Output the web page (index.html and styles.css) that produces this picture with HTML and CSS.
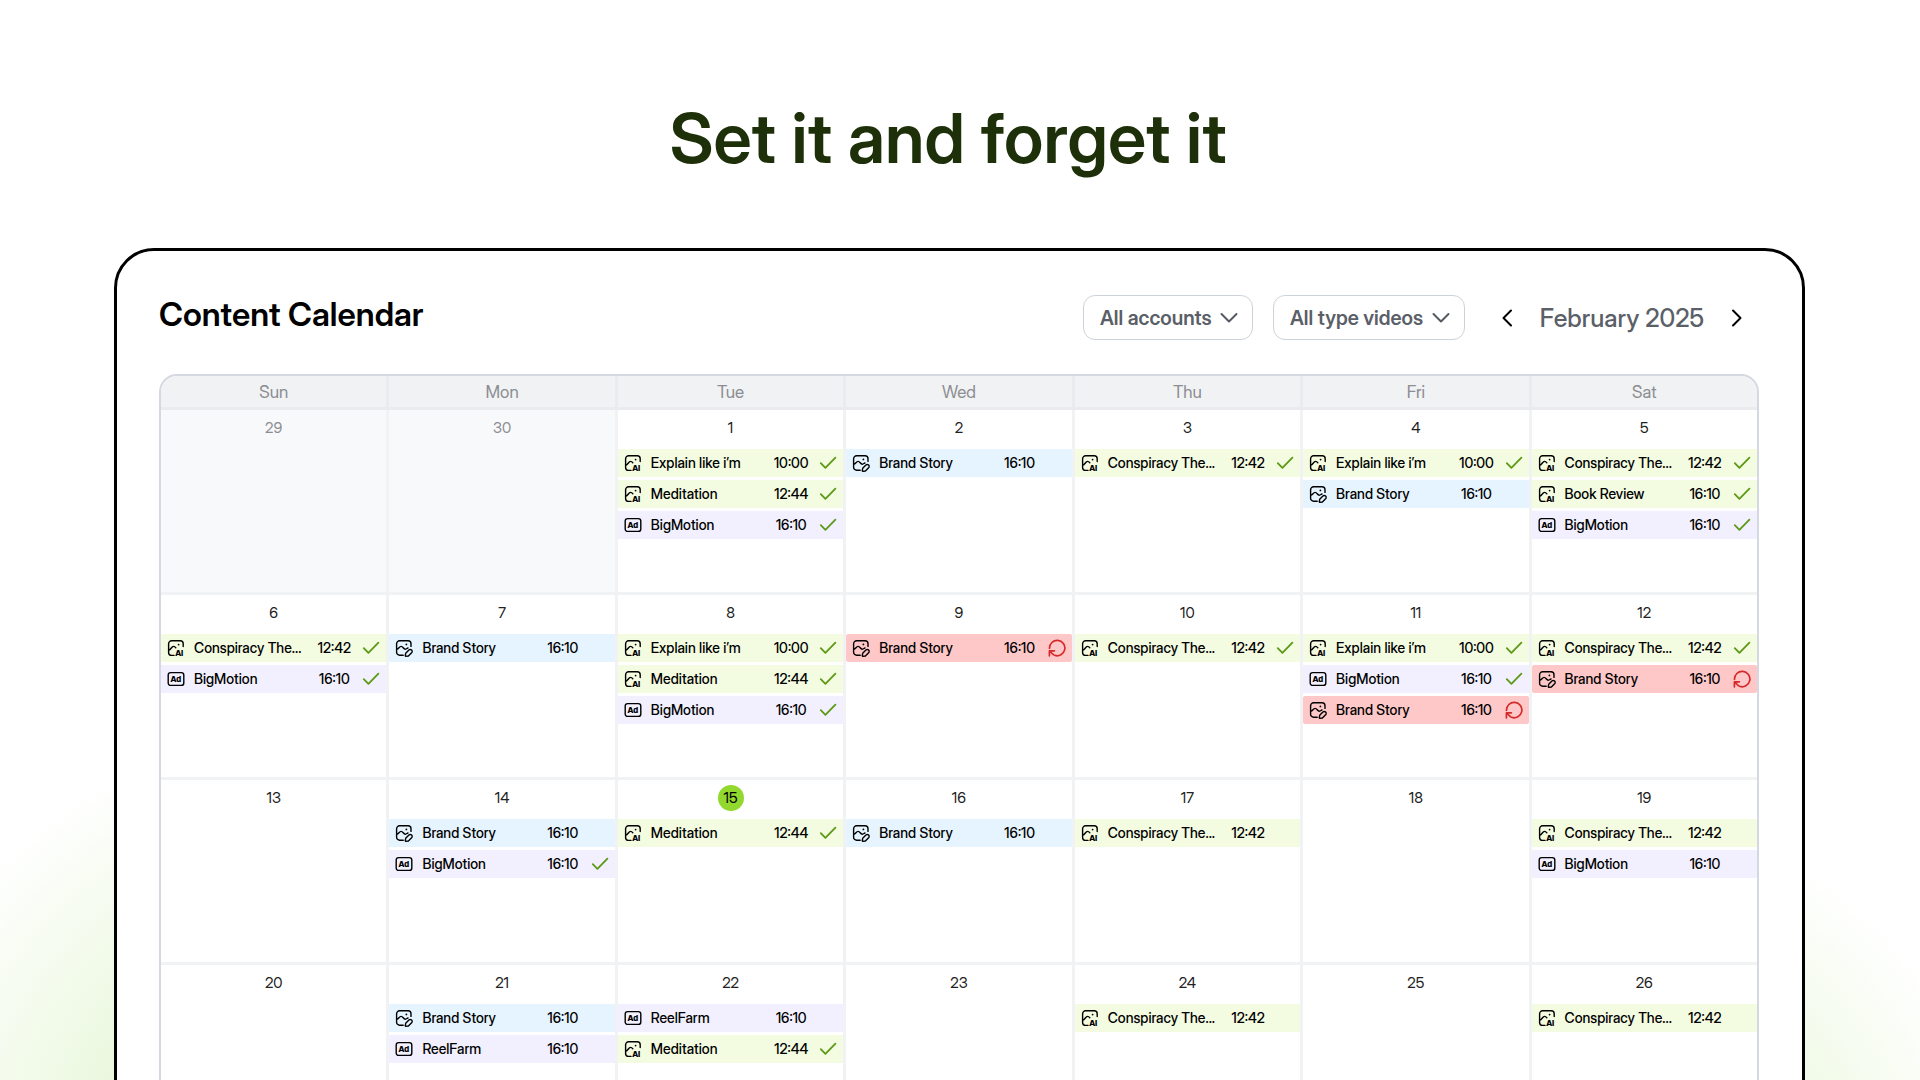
FILE: index.html
```html
<!DOCTYPE html>
<html lang="en">
<head>
<meta charset="utf-8">
<meta name="viewport" content="width=device-width, initial-scale=1">
<title>Content Calendar</title>
<link rel="stylesheet" href="styles.css">
</head>
<body>
<svg class="sprite" aria-hidden="true">
  <symbol id="ai" viewBox="0 0 18 18">
    <path class="line" d="M16.2 7.6V4.800a3 3 0 0 0-3-3H4.600a3 3 0 0 0-3 3v8.600a3 3 0 0 0 3 3h2.400M1.800 11.200c2.200-.4 2.600-3.800 4.800-3.800 1 0 1.600.6 2.200 1.300"/>
    <circle cx="11.600" cy="5.600" r=".9"/>
    <text class="glyph" x="8.200" y="17">AI</text>
  </symbol>
  <symbol id="edit" viewBox="0 0 18 18">
    <path class="line" d="M16 7.400V4.800a3 3 0 0 0-3-3H4.600a3 3 0 0 0-3 3v8.400a3 3 0 0 0 3 3h3.600M1.800 10.200c2-.2 2.400-2.800 4.300-2.800 2 0 2.200 2.800 4.200 2.800 1.300 0 1.700-1 2.700-1.200"/>
    <circle cx="11.400" cy="5.400" r=".9"/>
    <path class="line" d="M10.700 14.300l3.200-3.200a1.900 1.900 0 0 1 2.700 2.700l-3.200 3.200-2.700.3-.5-.5z"/>
  </symbol>
  <symbol id="ad" viewBox="0 0 18 18">
    <rect class="line" x="1.200" y="2.600" width="15.600" height="12.800" rx="2.500"/>
    <text class="glyph" x="3.500" y="11.900">Ad</text>
  </symbol>
  <symbol id="check" viewBox="0 0 18 18">
    <path class="tick" d="M1.800 9.200l4.600 4.600L16.400 3.600"/>
  </symbol>
  <symbol id="retry" viewBox="0 0 18 18">
    <path class="turn" d="M1.500 9.400A7.700 7.700 0 1 1 6.600 16.300M1.400 16.800v-5h5M1.600 12l3.800 3.600"/>
  </symbol>
</svg>
<main class="stage">
  <header class="hero"><h1>Set it and forget it</h1></header>
  <section class="panel">
    <div class="toolbar">
      <h2>Content Calendar</h2>
      <select class="filter" aria-label="Accounts"><option>All accounts</option></select>
      <select class="filter" aria-label="Video type"><option>All type videos</option></select>
      <div class="pager">
        <button type="button" aria-label="Previous month"><svg viewBox="0 0 20 20"><path d="M14 2.500 6.500 10l7.500 7.500"/></svg></button>
        <span class="month">February 2025</span>
        <button type="button" aria-label="Next month"><svg viewBox="0 0 20 20"><path d="M6 2.500 13.500 10 6 17.500"/></svg></button>
      </div>
    </div>
    <div class="calendar">
      <table>
        <thead><tr><th>Sun</th><th>Mon</th><th>Tue</th><th>Wed</th><th>Thu</th><th>Fri</th><th>Sat</th></tr></thead>
        <tbody>
          <tr>
            <td class="outside"><span class="day">29</span></td>
            <td class="outside"><span class="day">30</span></td>
            <td><span class="day">1</span><ul>
              <li class="green"><svg><use href="#ai"/></svg><span>Explain like i’m</span><time>10:00</time><svg><use href="#check"/></svg></li>
              <li class="green"><svg><use href="#ai"/></svg><span>Meditation</span><time>12:44</time><svg><use href="#check"/></svg></li>
              <li class="violet"><svg><use href="#ad"/></svg><span>BigMotion</span><time>16:10</time><svg><use href="#check"/></svg></li></ul></td>
            <td><span class="day">2</span><ul>
              <li class="blue"><svg><use href="#edit"/></svg><span>Brand Story</span><time>16:10</time></li></ul></td>
            <td><span class="day">3</span><ul>
              <li class="green"><svg><use href="#ai"/></svg><span>Conspiracy The...</span><time>12:42</time><svg><use href="#check"/></svg></li></ul></td>
            <td><span class="day">4</span><ul>
              <li class="green"><svg><use href="#ai"/></svg><span>Explain like i’m</span><time>10:00</time><svg><use href="#check"/></svg></li>
              <li class="blue"><svg><use href="#edit"/></svg><span>Brand Story</span><time>16:10</time></li></ul></td>
            <td><span class="day">5</span><ul>
              <li class="green"><svg><use href="#ai"/></svg><span>Conspiracy The...</span><time>12:42</time><svg><use href="#check"/></svg></li>
              <li class="green"><svg><use href="#ai"/></svg><span>Book Review</span><time>16:10</time><svg><use href="#check"/></svg></li>
              <li class="violet"><svg><use href="#ad"/></svg><span>BigMotion</span><time>16:10</time><svg><use href="#check"/></svg></li></ul></td>
          </tr>
          <tr>
            <td><span class="day">6</span><ul>
              <li class="green"><svg><use href="#ai"/></svg><span>Conspiracy The...</span><time>12:42</time><svg><use href="#check"/></svg></li>
              <li class="violet"><svg><use href="#ad"/></svg><span>BigMotion</span><time>16:10</time><svg><use href="#check"/></svg></li></ul></td>
            <td><span class="day">7</span><ul>
              <li class="blue"><svg><use href="#edit"/></svg><span>Brand Story</span><time>16:10</time></li></ul></td>
            <td><span class="day">8</span><ul>
              <li class="green"><svg><use href="#ai"/></svg><span>Explain like i’m</span><time>10:00</time><svg><use href="#check"/></svg></li>
              <li class="green"><svg><use href="#ai"/></svg><span>Meditation</span><time>12:44</time><svg><use href="#check"/></svg></li>
              <li class="violet"><svg><use href="#ad"/></svg><span>BigMotion</span><time>16:10</time><svg><use href="#check"/></svg></li></ul></td>
            <td><span class="day">9</span><ul>
              <li class="red"><svg><use href="#edit"/></svg><span>Brand Story</span><time>16:10</time><button type="button" aria-label="Retry"><svg><use href="#retry"/></svg></button></li></ul></td>
            <td><span class="day">10</span><ul>
              <li class="green"><svg><use href="#ai"/></svg><span>Conspiracy The...</span><time>12:42</time><svg><use href="#check"/></svg></li></ul></td>
            <td><span class="day">11</span><ul>
              <li class="green"><svg><use href="#ai"/></svg><span>Explain like i’m</span><time>10:00</time><svg><use href="#check"/></svg></li>
              <li class="violet"><svg><use href="#ad"/></svg><span>BigMotion</span><time>16:10</time><svg><use href="#check"/></svg></li>
              <li class="red"><svg><use href="#edit"/></svg><span>Brand Story</span><time>16:10</time><button type="button" aria-label="Retry"><svg><use href="#retry"/></svg></button></li></ul></td>
            <td><span class="day">12</span><ul>
              <li class="green"><svg><use href="#ai"/></svg><span>Conspiracy The...</span><time>12:42</time><svg><use href="#check"/></svg></li>
              <li class="red"><svg><use href="#edit"/></svg><span>Brand Story</span><time>16:10</time><button type="button" aria-label="Retry"><svg><use href="#retry"/></svg></button></li></ul></td>
          </tr>
          <tr>
            <td><span class="day">13</span></td>
            <td><span class="day">14</span><ul>
              <li class="blue"><svg><use href="#edit"/></svg><span>Brand Story</span><time>16:10</time></li>
              <li class="violet"><svg><use href="#ad"/></svg><span>BigMotion</span><time>16:10</time><svg><use href="#check"/></svg></li></ul></td>
            <td><span class="day today">15</span><ul>
              <li class="green"><svg><use href="#ai"/></svg><span>Meditation</span><time>12:44</time><svg><use href="#check"/></svg></li></ul></td>
            <td><span class="day">16</span><ul>
              <li class="blue"><svg><use href="#edit"/></svg><span>Brand Story</span><time>16:10</time></li></ul></td>
            <td><span class="day">17</span><ul>
              <li class="green"><svg><use href="#ai"/></svg><span>Conspiracy The...</span><time>12:42</time></li></ul></td>
            <td><span class="day">18</span></td>
            <td><span class="day">19</span><ul>
              <li class="green"><svg><use href="#ai"/></svg><span>Conspiracy The...</span><time>12:42</time></li>
              <li class="violet"><svg><use href="#ad"/></svg><span>BigMotion</span><time>16:10</time></li></ul></td>
          </tr>
          <tr>
            <td><span class="day">20</span></td>
            <td><span class="day">21</span><ul>
              <li class="blue"><svg><use href="#edit"/></svg><span>Brand Story</span><time>16:10</time></li>
              <li class="violet"><svg><use href="#ad"/></svg><span>ReelFarm</span><time>16:10</time></li></ul></td>
            <td><span class="day">22</span><ul>
              <li class="violet"><svg><use href="#ad"/></svg><span>ReelFarm</span><time>16:10</time></li>
              <li class="green"><svg><use href="#ai"/></svg><span>Meditation</span><time>12:44</time><svg><use href="#check"/></svg></li></ul></td>
            <td><span class="day">23</span></td>
            <td><span class="day">24</span><ul>
              <li class="green"><svg><use href="#ai"/></svg><span>Conspiracy The...</span><time>12:42</time></li></ul></td>
            <td><span class="day">25</span></td>
            <td><span class="day">26</span><ul>
              <li class="green"><svg><use href="#ai"/></svg><span>Conspiracy The...</span><time>12:42</time></li></ul></td>
          </tr>
        </tbody>
      </table>
    </div>
  </section>
</main>
</body>
</html>
```
FILE: styles.css
```css
* { box-sizing: border-box; }
body {
  margin: 0;
  background: #fff;
  color: #000;
  font-family: "Inter Display", Inter, "Liberation Sans", sans-serif;
}
h1, h2, ul { margin: 0; padding: 0; }
.sprite { display: none; }

.stage {
  height: 100vh;
  overflow: hidden;
  background:
    radial-gradient(520px 480px at 380px 110%, #9fda6a, rgba(226, 245, 208, .8) 50%, rgba(255, 255, 255, 0)),
    radial-gradient(480px 400px at calc(100% - 400px) 110%, #9fda6a, rgba(230, 247, 214, .8) 50%, rgba(255, 255, 255, 0));
}

.hero { padding: 94px 24px 66px 0; text-align: center; }
.hero h1 {
  color: #1e300a;
  font-size: 69px;
  font-weight: 600;
  line-height: 88px;
}

.panel {
  margin: 0 115px 0 114px;
  padding: 44px 43px 40px 42px;
  border: 3px solid #000;
  border-radius: 40px;
  background: #fff;
}
.toolbar {
  display: flex;
  align-items: center;
  gap: 20px;
  margin-bottom: 34px;
}
.toolbar h2 {
  margin-right: auto;
  padding-bottom: 8px;
  font-size: 33px;
  font-weight: 600;
  line-height: 36px;
}
.filter {
  height: 45px;
  padding: 0 40px 0 16px;
  border: 1px solid #cdd3da;
  border-radius: 12px;
  appearance: none;
  background: #fff url("data:image/svg+xml,%3Csvg xmlns='http://www.w3.org/2000/svg' width='18' height='12' viewBox='0 0 18 12'%3E%3Cpath d='M1.500 2 9 9.500 16.500 2' fill='none' stroke='%23555962' stroke-width='2' stroke-linecap='round' stroke-linejoin='round'/%3E%3C/svg%3E") no-repeat right 14px center;
  color: #5b5f68;
  font-family: inherit;
  font-size: 20px;
  font-weight: 600;
  line-height: 24px;
}
.pager { display: flex; align-items: center; }
.pager button, li button {
  display: flex;
  align-items: center;
  justify-content: center;
  padding: 0;
  border: 0;
  background: none;
}
.pager button { width: 44px; height: 44px; }
.pager svg {
  width: 20px;
  height: 20px;
  fill: none;
  stroke: #000;
  stroke-width: 2;
  stroke-linecap: round;
  stroke-linejoin: round;
}
.month {
  min-width: 186px;
  color: #5b5f68;
  font-size: 25px;
  font-weight: 500;
  line-height: 32px;
  text-align: center;
}

.calendar {
  overflow: hidden;
  border: 2px solid #d4d8e0;
  border-radius: 18px;
}
table {
  width: calc(100% + 3px);
  table-layout: fixed;
  border-spacing: 0;
}
th, td {
  padding: 0;
  border: solid #f1f2f4;
  border-width: 0 3px 3px 0;
}
th {
  height: 34px;
  border-color: #eaebee;
  background: #f1f2f4;
  color: #8b8d91;
  font-size: 17px;
  font-weight: 400;
  line-height: 20px;
}
td { height: 185px; vertical-align: top; }
.outside { background: #f8f9fb; }
.day {
  display: block;
  width: 26px;
  margin: 5px auto 8px;
  border-radius: 50%;
  color: #222;
  font-size: 15px;
  line-height: 26px;
  text-align: center;
}
.outside .day { color: #8b8d91; }
.today { background: #92d82f; color: #000; }

ul { display: grid; gap: 3px; list-style: none; }
li {
  display: grid;
  grid-template-columns: 18px 1fr 40px 18px;
  column-gap: 8px;
  align-items: center;
  height: 28px;
  padding: 0 6px;
  font-size: 14px;
  font-weight: 500;
  line-height: 20px;
  white-space: nowrap;
}
li span { padding-left: 1px; }
time { justify-self: center; }
li svg { display: block; width: 18px; height: 18px; }
.green { background: #f3fbe1; }
.blue { background: #e6f4ff; }
.violet { background: #f2f0fe; }
.red { border-radius: 2px; background: #ffc8c8; }

.line { fill: none; stroke: #000; stroke-width: 1.4; stroke-linecap: round; stroke-linejoin: round; }
.glyph { font: 800 8px "Inter Display", Inter, sans-serif; }
.tick { fill: none; stroke: #5c9a16; stroke-width: 1.8; stroke-linecap: round; stroke-linejoin: round; }
.turn { fill: none; stroke: #d42a2a; stroke-width: 1.7; stroke-linecap: round; stroke-linejoin: round; }
```
